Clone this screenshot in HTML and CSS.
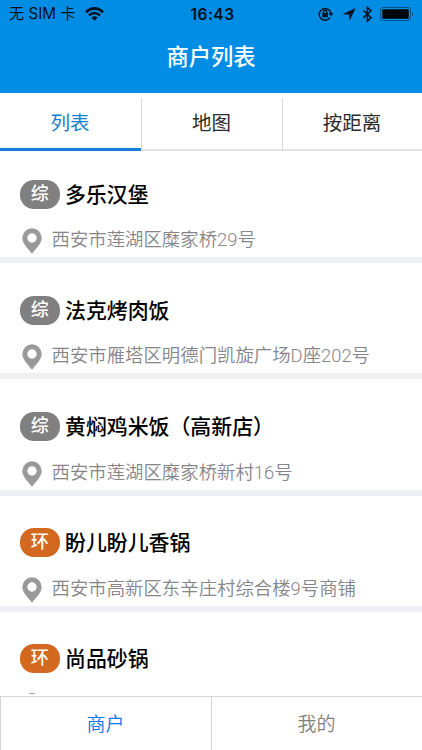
FILE: index.html
```
<!DOCTYPE html>
<html lang="zh-CN">
<head>
<meta charset="utf-8">
<title>商户列表</title>
<link rel="stylesheet" href="styles.css">
</head>
<body>
<svg width="0" height="0" class="defs">
<symbol id="pin" viewBox="0 0 20 26"><path fill-rule="evenodd" d="M10 .3A9.700 9.700 0 0 0 .3 10C.3 15.500 6 20.500 10 25.700 14 20.500 19.700 15.500 19.700 10A9.700 9.700 0 0 0 10 .3zm0 5a4.700 4.700 0 1 1 0 9.400 4.700 4.700 0 0 1 0-9.400z"/></symbol>
</svg>
<header>
<div class="status">
<div class="carrier"><span>无 SIM 卡</span><svg width="19" height="14" viewBox="0 0 19 14"><g fill="none" stroke="#00101c" stroke-width="2.500"><path d="M.9 5.200Q9.500-2.400 18.100 5.200"/><path d="M3.900 8.400Q9.500 3.500 15.100 8.400"/></g><path fill="#00101c" d="M6.300 10.600Q9.500 7.800 12.700 10.600L9.500 13.700Z"/></svg></div>
<b class="time">16:43</b>
<svg class="icons" width="98" height="18" viewBox="0 0 98 18">
<g fill="none" stroke="#00101c" stroke-width="1.400"><path d="M12 12.700A5.900 5.900 0 1 1 12.900 8.200"/><path d="M5.400 8.500V6.900a1.700 1.700 0 0 1 3.400 0V8.500"/></g>
<path fill="#00101c" d="M4.300 8h5.600v4.200H4.300zM10.600 8h4.800L13 11.300z"/>
<path fill="#00101c" d="M37.500 3L24.500 9.200l6.700.4.300 6.400z"/>
<path d="M45.500 5.500l7.500 7.300-3.600 3.200V2.400L53 5.700l-7.500 7.200" fill="none" stroke="#00101c" stroke-width="1.500"/>
<rect x="62.500" y="2.500" width="30" height="13" rx="2.500" fill="none" stroke="#03558a"/>
<rect x="64.300" y="4.300" width="26.500" height="9.500" rx="1" fill="#00070c"/>
<path fill="#03558a" d="M94 7v4.500q2.400-2.200 0-4.500"/>
</svg>
</div>
<h1>商户列表</h1>
</header>
<nav class="tabs"><span class="on">列表</span><span>地图</span><span>按距离</span></nav>
<main>
<article><h2><span class="badge">综</span>多乐汉堡</h2><p><svg class="pin"><use href="#pin"/></svg>西安市莲湖区糜家桥29号</p></article>
<article><h2><span class="badge">综</span>法克烤肉饭</h2><p><svg class="pin"><use href="#pin"/></svg>西安市雁塔区明德门凯旋广场D座202号</p></article>
<article><h2><span class="badge">综</span>黄焖鸡米饭（高新店）</h2><p><svg class="pin"><use href="#pin"/></svg>西安市莲湖区糜家桥新村16号</p></article>
<article><h2><span class="badge ring">环</span>盼儿盼儿香锅</h2><p><svg class="pin"><use href="#pin"/></svg>西安市高新区东辛庄村综合楼9号商铺</p></article>
<article><h2><span class="badge ring">环</span>尚品砂锅</h2><p><svg class="pin dark"><use href="#pin"/></svg></p></article>
</main>
<footer><span class="on">商户</span><span>我的</span></footer>
</body>
</html>
```
FILE: styles.css
```
* { box-sizing: border-box; }
body {
  margin: 0;
  height: 750px;
  overflow: hidden;
  display: flex;
  flex-direction: column;
  background: #fff;
  font-family: "Liberation Sans", "Noto Sans CJK SC", sans-serif;
}
.defs { position: absolute; }
header { flex: none; height: 93px; background: #008de3; }
.status {
  height: 28px;
  padding: 0 6px 0 9px;
  display: grid;
  grid-template-columns: 1fr auto 1fr;
  align-items: center;
  color: #00101c;
  font-family: Inter, "Noto Sans CJK SC", sans-serif;
  font-size: 15.200px;
}
.carrier { display: flex; align-items: center; gap: 9px; white-space: nowrap; }
.carrier span { width: 67px; line-height: 26px; }
.time { font-size: 15.500px; font-weight: 600; letter-spacing: .5px; }
.icons { justify-self: end; }
h1 {
  margin: 0;
  height: 58px;
  line-height: 60px;
  text-align: center;
  color: #fff;
  font-size: 22.300px;
  font-weight: 500;
}
.tabs {
  flex: none;
  height: 58px;
  padding-top: 5px;
  display: grid;
  grid-template-columns: 141px 141px 1fr;
  color: #2b2b2b;
  font-size: 19.500px;
}
.tabs span {
  display: flex;
  justify-content: center;
  align-items: center;
  border-bottom: 2px solid #e2e2e2;
  padding: 0 1px 4px 0;
}
.tabs span + span { border-left: 1px solid #d9d9d9; }
.tabs .on { color: #1680d0; border-bottom: 3px solid #1480da; padding-bottom: 3px; }
main { flex: 1; min-height: 0; overflow: hidden; }
article { height: 116.200px; padding: 32.700px 20px 0; border-bottom: 6px solid #efeff6; }
article:first-child { height: 112.200px; padding-top: 28.500px; }
h2 {
  margin: 0;
  height: 29px;
  display: flex;
  align-items: center;
  gap: 5.500px;
  color: #000;
  font-size: 20.900px;
  font-weight: 500;
  line-height: 29px;
  white-space: nowrap;
}
.badge {
  flex: none;
  width: 39.500px;
  height: 29px;
  border-radius: 14px;
  background: #808080;
  color: #fff;
  font-size: 18px;
  line-height: 29px;
  text-align: center;
}
.ring { background: #d2691e; }
p {
  margin: 15px 0 0;
  height: 29px;
  padding-left: 2px;
  display: flex;
  align-items: center;
  gap: 9.500px;
  color: #85858a;
  font-family: Roboto, "Noto Sans CJK SC", sans-serif;
  font-size: 18.400px;
  font-weight: 350;
  white-space: nowrap;
}
.pin { flex: none; width: 20px; height: 26px; margin-top: 6px; fill: #999; }
.dark { fill: #666; }
footer {
  flex: none;
  height: 54px;
  margin-top: 2px;
  display: grid;
  grid-template-columns: 1fr 1fr;
  border-top: 1px solid #d4d4d4;
  background: #fff;
  color: #808080;
  font-size: 19px;
  font-weight: 350;
}
footer span {
  display: flex;
  align-items: center;
  justify-content: center;
  border-left: 1px solid #d4d4d4;
  padding: 0 1px 2px 0;
}
footer .on { color: #0a74e8; }
```
